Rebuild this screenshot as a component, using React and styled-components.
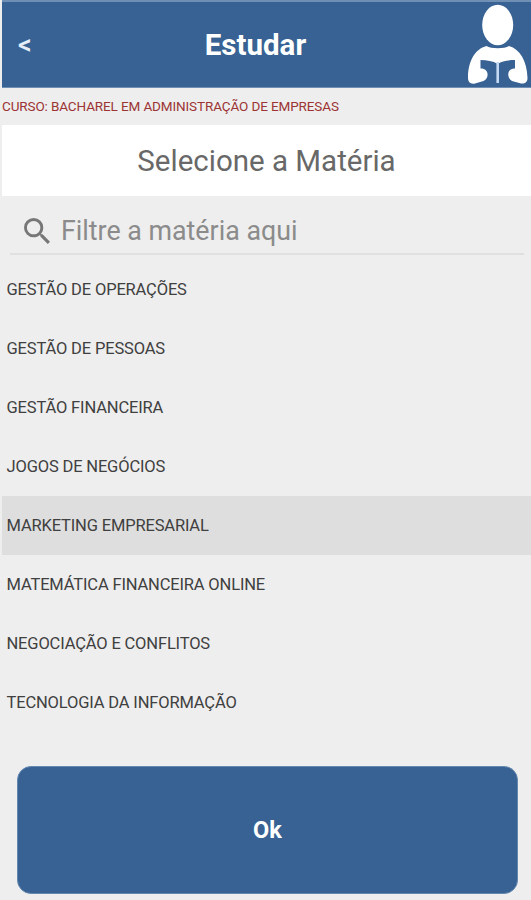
import { useState } from "react"
import styled, { createGlobalStyle } from "styled-components"

const GlobalStyle = createGlobalStyle`
    body {
        margin: 0;
        background: #eeeeee;
        font-family: Roboto, sans-serif;
    }
    * {
        box-sizing: border-box;
    }
`;

const Screen = styled.div`
    display: flex;
    flex-direction: column;
    height: 900px;
    padding-left: 2px;
    overflow: hidden;
    background: #eeeeee;
`;

const Header = styled.header`
    display: grid;
    grid-template-columns: 66px 1fr 66px;
    align-items: center;
    height: 88px;
    flex-shrink: 0;
    background: #376293;
    border-top: 2px solid #6f8fb5;
    border-bottom: 1px solid #6f8fb5;
    color: #fff;
`;

const BackButton = styled.button`
    border: 0;
    padding: 0 0 0 16px;
    background: none;
    color: #e4edf8;
    font: 500 27px Roboto, sans-serif;
    text-align: left;
    cursor: pointer;
`;

const HeaderTitle = styled.h1`
    margin: 0;
    padding-right: 22px;
    font-size: 29.5px;
    font-weight: 700;
    line-height: 36px;
    text-align: center;
`;

const ReaderSvg = styled.svg`
    display: block;
    width: 66px;
    height: 85px;
`;

const Course = styled.p`
    height: 37px;
    flex-shrink: 0;
    margin: 0;
    line-height: 37px;
    font-size: 13.5px;
    letter-spacing: -0.12px;
    color: #9c3434;
    white-space: nowrap;
`;

const SectionTitle = styled.h2`
    height: 71px;
    flex-shrink: 0;
    margin: 0;
    background: #fff;
    color: #686868;
    font-size: 29.5px;
    font-weight: 400;
    line-height: 72px;
    text-align: center;
`;

const SearchBar = styled.label`
    display: flex;
    align-items: center;
    gap: 11px;
    height: 59px;
    flex-shrink: 0;
    margin: 0 7px 0 8px;
    padding: 12px 0 0 14px;
    border-bottom: 2px solid #e0e0e0;
`;

const SearchInput = styled.input`
    flex: 1;
    min-width: 0;
    border: 0;
    outline: 0;
    padding: 0;
    background: none;
    color: #555;
    font: 400 26.8px Roboto, sans-serif;

    &::placeholder {
        color: #8b8b8b;
        opacity: 1;
    }
`;

const List = styled.ul`
    margin: 0;
    padding: 5px 0 0;
    list-style: none;
`;

const Item = styled.li`
    height: 59px;
    padding-left: 4.5px;
    line-height: 60px;
    font-size: 16.5px;
    letter-spacing: -0.16px;
    color: #404040;
    white-space: nowrap;
    cursor: pointer;
    background: ${props => props.$selected ? "#dedede" : "transparent"};
`;

const OkButton = styled.button`
    height: 128px;
    flex-shrink: 0;
    margin: 34px 13px 0 15px;
    border: 1px solid #6488b0;
    border-radius: 14px;
    background: #376293;
    color: #fff;
    font: 700 23.5px Roboto, sans-serif;
    cursor: pointer;
`;

const ReaderIcon = () => (
    <ReaderSvg viewBox="0 2 66 85">
        <ellipse cx="32.7" cy="25" rx="15.5" ry="20.3" fill="#fff" />
        <path
            d="M21.5 46C26 49 39.5 49 44 46C55 49 62 61 62.5 78C62.5 82 60 84 56 83.5L47 81C43 79 42 73 45 70C47 68.5 48.5 68.5 50 68.5V60C43 60 37 61 32.7 64C28 61 22 60 15.5 60V68.5C18 68.5 20 69 21.5 71C24 75 22 79 18.5 81L10 83.5C5.5 84.5 3 82 3 78C3 61 10 49 21.5 46Z"
            fill="#fff"
        />
        <path d="M32.7 62V83" stroke="#c5daf2" strokeWidth="2.6" />
    </ReaderSvg>
)

const SearchIcon = () => (
    <svg width="26" height="26" viewBox="3 3 17.5 17.5" fill="#777">
        <path d="M15.5 14h-.79l-.28-.27A6.47 6.47 0 0 0 16 9.5 6.5 6.5 0 1 0 9.5 16c1.61 0 3.09-.59 4.23-1.57l.27.28v.79l5 4.99L20.49 19l-4.99-5zm-6 0C7.01 14 5 11.99 5 9.5S7.01 5 9.5 5 14 7.01 14 9.5 11.99 14 9.5 14z" />
    </svg>
)

const materias = [
    "GESTÃO DE OPERAÇÕES",
    "GESTÃO DE PESSOAS",
    "GESTÃO FINANCEIRA",
    "JOGOS DE NEGÓCIOS",
    "MARKETING EMPRESARIAL",
    "MATEMÁTICA FINANCEIRA ONLINE",
    "NEGOCIAÇÃO E CONFLITOS",
    "TECNOLOGIA DA INFORMAÇÃO",
]

const App = () => {
    const [selected, setSelected] = useState("MARKETING EMPRESARIAL")
    const [filter, setFilter] = useState("")

    const visible = materias.filter((m) => m.includes(filter.toUpperCase()))

    return (
        <>
            <GlobalStyle />
            <Screen>
                <Header>
                    <BackButton>&lt;</BackButton>
                    <HeaderTitle>Estudar</HeaderTitle>
                    <ReaderIcon />
                </Header>
                <Course>CURSO: BACHAREL EM ADMINISTRAÇÃO DE EMPRESAS</Course>
                <SectionTitle>Selecione a Matéria</SectionTitle>
                <SearchBar>
                    <SearchIcon />
                    <SearchInput
                        placeholder="Filtre a matéria aqui"
                        value={filter}
                        onChange={(e) => setFilter(e.target.value)}
                    />
                </SearchBar>
                <List>
                    {visible.map((m) => (
                        <Item key={m} $selected={m === selected} onClick={() => setSelected(m)}>{m}</Item>
                    ))}
                </List>
                <OkButton>Ok</OkButton>
            </Screen>
        </>
    )
}

export default App
